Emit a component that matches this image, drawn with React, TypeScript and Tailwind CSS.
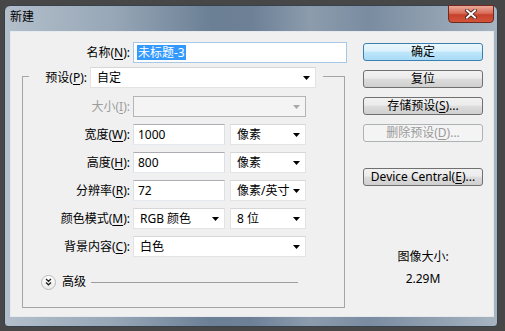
import React from "react";

const font = "font-['Noto_Sans','Noto_Sans_CJK_SC',sans-serif]";

// 下向きの小さな三角形（コンボボックスの矢印）
const Arrow = ({ disabled = false }: { disabled?: boolean }) => (
  <svg width="7" height="4" viewBox="0 0 7 4" className="shrink-0">
    <path d="M0 0H7L3.5 4Z" fill={disabled ? "#a8a8a8" : "#000"} />
  </svg>
);

const Key = ({ label, k, disabled = false }: { label: string; k: string; disabled?: boolean }) => (
  <span className={disabled ? "text-[#9d9d9d]" : "text-black"}>
    {label}(<span className="underline underline-offset-2">{k}</span>):
  </span>
);

const Combo = ({
  value,
  w,
  disabled = false,
}: {
  value?: string;
  w: string;
  disabled?: boolean;
}) => (
  <div
    className={`${w} h-[21px] flex items-center justify-between pl-[6px] pr-[5px] border ${
      disabled ? "bg-[#f4f4f4] border-[#b5b5b5]" : "bg-white border-[#e3e3e3] border-t-[#d6d6d6]"
    }`}
  >
    <span className="text-[12px] leading-none">{value}</span>
    <Arrow disabled={disabled} />
  </div>
);

const TextBox = ({ value, w }: { value: string; w: string }) => (
  <div className={`${w} h-[21px] flex items-center pl-[4px] bg-white border border-[#e3e9ef] border-t-[#abadb3] border-x-[#dbdfe6]`}>
    <span className="text-[12px] leading-none">{value}</span>
  </div>
);

const Row = ({ children, className = "" }: { children: React.ReactNode; className?: string }) => (
  <div className={`flex items-center h-[21px] ${className}`}>{children}</div>
);

const Btn = ({
  children,
  primary = false,
  disabled = false,
  className = "",
}: {
  children: React.ReactNode;
  primary?: boolean;
  disabled?: boolean;
  className?: string;
}) => (
  <div
    className={`w-[120px] h-[18px] flex items-center justify-center rounded-[3px] border text-[12px] leading-none ${className} ${
      primary
        ? "border-[#3c7fb1] bg-[linear-gradient(180deg,#ebf7fe_0%,#dbf1fc_45%,#bfe6fc_50%,#a8daf6_100%)] text-black"
        : disabled
        ? "border-[#adb2b5] bg-[#f4f4f4] text-[#9a9a9a]"
        : "border-[#707070] bg-[linear-gradient(180deg,#f2f2f2_0%,#ebebeb_45%,#dddddd_50%,#cfcfcf_100%)] text-black"
    }`}
  >
    {children}
  </div>
);

export default function App() {
  return (
    <div className={`w-[505px] h-[331px] bg-[#474747] pt-[5px] pl-[4px] ${font}`}>
      {/* ウィンドウ枠 */}
      <div className="w-[494px] h-[322px] flex flex-col rounded-t-[6px] rounded-b-[4px] border border-[#37414c] bg-[linear-gradient(90deg,#b3bfcb_0%,#97a7b7_22%,#6b7f95_42%,#6d8096_50%,#8c9cad_62%,#7a8ca1_74%,#8e9eaf_86%,#a7b4c1_100%)]">
        {/* タイトルバー */}
        <div className="h-[25px] flex justify-between shrink-0">
          <span className="pl-[5px] pt-[5px] text-[12px] leading-none text-black">新建</span>
          <div className="w-[46px] h-[18px] mr-[3px] -mt-px flex items-center justify-center rounded-b-[4px] border border-[#6e2a20] bg-[linear-gradient(180deg,#eba89a_0%,#d86d58_45%,#c7412b_55%,#d3543b_100%)]">
            <svg width="12" height="10" viewBox="0 0 12 10">
              <path d="M2 1.5L10 8.5M10 1.5L2 8.5" stroke="#3a1a14" strokeWidth="3.6" strokeLinecap="square" />
              <path d="M2 1.5L10 8.5M10 1.5L2 8.5" stroke="#fff" strokeWidth="2" strokeLinecap="square" />
            </svg>
          </div>
        </div>

        {/* クライアント領域 */}
        <div className="ml-[5px] mr-[3px] h-[286px] flex bg-[#f0f0f0] border border-[#e6eaef] text-[12px] text-black">
          {/* 左側 */}
          <div className="w-[352px] pt-[10px]">
            <Row>
              <div className="w-[119px] text-right">
                <Key label="名称" k="N" />
              </div>
              <div className="ml-[3px] w-[214px] h-[21px] flex items-center pl-[3px] bg-white border border-[#a6c8e6]">
                <span className="bg-[#3399ff] text-white leading-[15px] px-px">未标题-3</span>
              </div>
            </Row>

            {/* グループボックス */}
            <div className="mt-[13px] ml-[11px] w-[323px] h-[232px] border border-[#a5a5a5]">
              <div className="-mt-[10px] ml-[6px] w-[294px] flex items-center bg-[#f0f0f0]">
                <div className="w-[58px] text-right">
                  <Key label="预设" k="P" />
                </div>
                <div className="ml-[3px]">
                  <Combo value="自定" w="w-[226px]" />
                </div>
              </div>

              <div className="mt-[8px] flex flex-col gap-[7px]">
                <Row>
                  <div className="w-[107px] text-right">
                    <Key label="大小" k="I" disabled />
                  </div>
                  <div className="ml-[3px]">
                    <Combo w="w-[173px]" disabled />
                  </div>
                </Row>
                <Row>
                  <div className="w-[107px] text-right">
                    <Key label="宽度" k="W" />
                  </div>
                  <div className="ml-[3px] flex gap-[5px]">
                    <TextBox value="1000" w="w-[92px]" />
                    <Combo value="像素" w="w-[76px]" />
                  </div>
                </Row>
                <Row>
                  <div className="w-[107px] text-right">
                    <Key label="高度" k="H" />
                  </div>
                  <div className="ml-[3px] flex gap-[5px]">
                    <TextBox value="800" w="w-[92px]" />
                    <Combo value="像素" w="w-[76px]" />
                  </div>
                </Row>
                <Row>
                  <div className="w-[107px] text-right">
                    <Key label="分辨率" k="R" />
                  </div>
                  <div className="ml-[3px] flex gap-[5px]">
                    <TextBox value="72" w="w-[92px]" />
                    <Combo value="像素/英寸" w="w-[76px]" />
                  </div>
                </Row>
                <Row>
                  <div className="w-[107px] text-right">
                    <Key label="颜色模式" k="M" />
                  </div>
                  <div className="ml-[3px] flex gap-[5px]">
                    <Combo value="RGB 颜色" w="w-[92px]" />
                    <Combo value="8 位" w="w-[76px]" />
                  </div>
                </Row>
                <Row>
                  <div className="w-[107px] text-right">
                    <Key label="背景内容" k="C" />
                  </div>
                  <div className="ml-[3px]">
                    <Combo value="白色" w="w-[173px]" />
                  </div>
                </Row>
              </div>

              {/* 高级 */}
              <div className="mt-[17px] ml-[18px] h-[16px] flex items-center">
                <div className="w-[15px] h-[15px] rounded-full border border-[#b9b9b9] bg-[linear-gradient(180deg,#ffffff_0%,#e9e9e9_100%)] flex items-center justify-center">
                  <svg width="7" height="8" viewBox="0 0 7 8">
                    <path d="M1 1L3.5 3.3L6 1M1 4.5L3.5 6.8L6 4.5" stroke="#222" strokeWidth="1.3" fill="none" />
                  </svg>
                </div>
                <span className="ml-[6px] leading-none">高级</span>
                <div className="ml-[5px] w-[207px] h-px bg-[#9e9e9e]" />
              </div>
            </div>
          </div>

          {/* 右側のボタン */}
          <div className="w-[120px] pt-[11px] flex flex-col">
            <Btn primary>确定</Btn>
            <Btn className="mt-[9px]">复位</Btn>
            <Btn className="mt-[9px]">
              存储预设(<span className="underline underline-offset-2">S</span>)...
            </Btn>
            <Btn className="mt-[9px]" disabled>
              删除预设(<span className="underline underline-offset-2">D</span>)...
            </Btn>
            <Btn className="mt-[26px]">
              Device Central(<span className="underline underline-offset-2">E</span>)...
            </Btn>
            <div className="mt-[63px] text-center leading-[16px]">图像大小:</div>
            <div className="mt-[6px] text-center leading-[16px]">2.29M</div>
          </div>
        </div>
      </div>
    </div>
  );
}
